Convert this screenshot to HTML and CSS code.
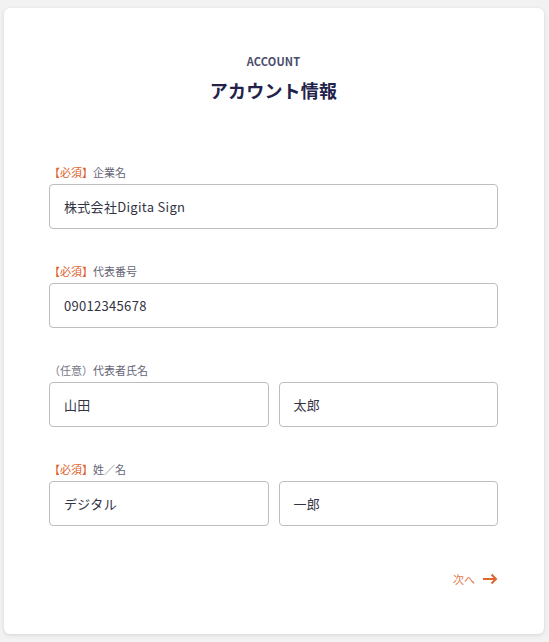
FILE: index.html
```html
<!DOCTYPE html>
<html lang="ja">
<head>
<meta charset="utf-8">
<link rel="stylesheet" href="styles.css">
</head>
<body>
<div class="card">
  <div class="head">
    <div class="eyebrow">ACCOUNT</div>
    <h1 class="title">アカウント情報</h1>
  </div>
  <form class="form">
    <div class="field">
      <div class="label"><span class="req">【必須】</span>企業名</div>
      <div class="row"><div class="input">株式会社Digita Sign</div></div>
    </div>
    <div class="field">
      <div class="label"><span class="req">【必須】</span>代表番号</div>
      <div class="row"><div class="input">09012345678</div></div>
    </div>
    <div class="field">
      <div class="label"><span class="opt">（任意）</span>代表者氏名</div>
      <div class="row two"><div class="input">山田</div><div class="input">太郎</div></div>
    </div>
    <div class="field">
      <div class="label"><span class="req">【必須】</span>姓／名</div>
      <div class="row two"><div class="input">デジタル</div><div class="input">一郎</div></div>
    </div>
  </form>
  <div class="actions">
    <a class="next">次へ<svg class="arrow" width="15" height="12" viewBox="0 0 15 12"><path d="M0 6H13.5M8.5 1.5L13 6L8.5 10.5" fill="none" stroke="#e0662e" stroke-width="2"/></svg></a>
  </div>
</div>
</body>
</html>
```
FILE: styles.css
```css
html, body {
  margin: 0;
  padding: 0;
}
body {
  background: #f2f2f2;
  font-family: "Noto Sans CJK JP", "Noto Sans", sans-serif;
  width: 549px;
  height: 642px;
  overflow: hidden;
}
.card {
  margin: 8px 5px 0 4px;
  height: 626px;
  box-sizing: border-box;
  background: #fff;
  border-radius: 6px;
  box-shadow: 0 1px 4px rgba(0,0,0,0.12);
  padding: 45px 46px 0 45px;
}
.head {
  text-align: center;
}
.eyebrow {
  font-size: 11px;
  font-weight: 700;
  letter-spacing: 0.2px;
  color: #4b4b6b;
  line-height: 16px;
}
.title {
  margin: 8px 0 0;
  font-size: 18px;
  font-weight: 700;
  color: #22224a;
  letter-spacing: 0.2px;
  line-height: 26px;
}
.form {
  margin-top: 61px;
  display: flex;
  flex-direction: column;
  gap: 34px;
}
.field {
  display: flex;
  flex-direction: column;
  gap: 4px;
}
.label {
  font-size: 11px;
  line-height: 16px;
  color: #666677;
}
.req {
  color: #dd5f2c;
}
.opt {
  color: #777788;
}
.row {
  display: flex;
  gap: 10px;
}
.input {
  flex: 1;
  height: 45px;
  box-sizing: border-box;
  border: 1px solid #bdbdbd;
  border-radius: 4px;
  padding: 0 14px;
  display: flex;
  align-items: center;
  font-size: 13px;
  color: #333344;
  letter-spacing: 0.3px;
}
.actions {
  margin-top: 45px;
  display: flex;
  justify-content: flex-end;
}
.next {
  display: flex;
  align-items: center;
  gap: 8px;
  font-size: 11px;
  color: #e27a50;
  line-height: 16px;
}
.arrow {
  display: block;
}
```
